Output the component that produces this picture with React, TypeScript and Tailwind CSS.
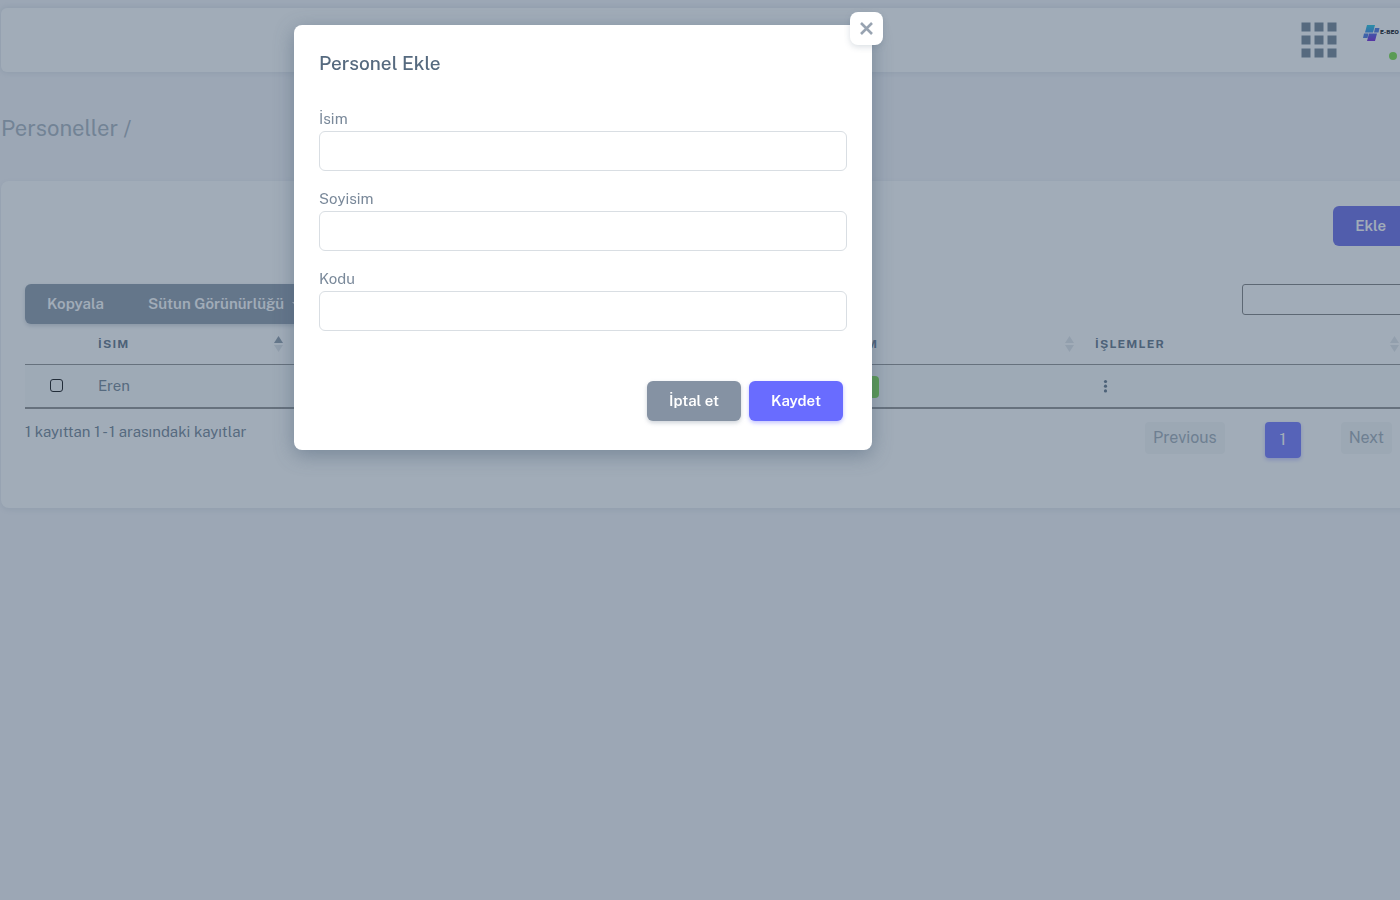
import React from "react";

type PersonnelType = { name: string; surname: string; code: string; status: string };

const personnel: PersonnelType[] = [{ name: "Eren", surname: "Yılmaz", code: "1001", status: "AKTIF" }];

const fields = [
    { id: "name", label: "İsim" },
    { id: "surname", label: "Soyisim" },
    { id: "code", label: "Kodu" },
];

export default function App() {
    const [open, setOpen] = React.useState(true);

    return (
        <div className="relative min-h-screen overflow-hidden bg-[#f5f5f9] font-['Public_Sans',Inter,sans-serif] text-[15px] leading-6 text-[#697a8d]">
            <div className="w-[calc(100%+24px)] pt-2 pl-px">
                <Navbar />
                <h4 className="mt-10 mb-[37px] text-[22px] leading-8 text-[#a1acb8]">Personeller /</h4>
                <PersonnelCard onAdd={() => setOpen(true)} />
            </div>
            {open && <AddDialog onClose={() => setOpen(false)} />}
        </div>
    );
}

const Navbar = () => (
    <nav className="flex h-16 items-center justify-end gap-[25px] rounded-md bg-white pr-[22px] shadow-[0_0_6px_1px_rgba(67,89,113,0.14)]">
        <button aria-label="Uygulamalar" className="text-[#697a8d]">
            <svg width="36" height="36" viewBox="0 0 36 36" fill="currentColor">
                {[0, 13, 26].map((y) => [0, 13, 26].map((x) => <rect key={`${x}-${y}`} x={x + 0.5} y={y + 0.5} width="9" height="9" />))}
            </svg>
        </button>
        <a href="#profil" aria-label="Profil" className="relative block size-10">
            <Logo />
            <span className="absolute right-[5px] bottom-0 size-2 rounded-full bg-[#71dd37]" />
        </a>
    </nav>
);

const Logo = () => (
    <svg width="40" height="40" viewBox="0 0 40 40">
        <defs>
            <linearGradient id="logoTop" x1="0" y1="0" x2="0" y2="1">
                <stop offset="0" stopColor="#10c3dc" />
                <stop offset="1" stopColor="#2c82e8" />
            </linearGradient>
            <linearGradient id="logoBottom" x1="0" y1="0" x2="0" y2="1">
                <stop offset="0" stopColor="#4050e0" />
                <stop offset="1" stopColor="#6a10d8" />
            </linearGradient>
        </defs>
        <path d="M5 5h8l-2 7.500H3z" fill="url(#logoTop)" />
        <path d="M13 8h4.500l-1 4.500h-4.500z" fill="#3a6ce0" />
        <path d="M2 13.500h4.500l-1 4.500H1z" fill="#3a6ce0" />
        <path d="M7 13.500h8l-2 7.500H5z" fill="url(#logoBottom)" />
        <text x="18" y="14" fontSize="6" fontWeight="900" fill="#10141c">
            E-BEO
        </text>
    </svg>
);

const PersonnelCard: React.FC<{ onAdd: () => void }> = ({ onAdd }) => (
    <section className="rounded-lg bg-white px-6 pt-[25px] pb-[50px] shadow-[0_2px_6px_0_rgba(67,89,113,0.12)]">
        <div className="flex justify-end">
            <button onClick={onAdd} className="-mr-2 h-10 rounded-md bg-[#5f61e6] px-[22px] font-semibold text-white">
                Ekle
            </button>
        </div>
        <div className="mt-[38px] flex items-start justify-between">
            <div className="flex h-10 rounded-md bg-[#8592a3] font-semibold text-white shadow-[0_2px_4px_0_rgba(133,146,163,0.4)]">
                <button className="px-[22px]">Kopyala</button>
                <button className="flex items-center gap-2 px-[22px]">
                    Sütun Görünürlüğü
                    <span className="border-x-4 border-t-4 border-x-transparent border-t-white" />
                </button>
            </div>
            <input type="search" aria-label="Ara" className="-mr-5 h-[31px] w-[178px] rounded-[3px] border border-[#777] px-2" />
        </div>
        <table className="w-full table-fixed border-b-2 border-[#888] text-left">
            <thead>
                <tr className="h-10 border-b border-[#888] text-[#566a7f]">
                    <th className="w-[53px]" />
                    <SortHead className="w-[15%]" active>
                        İSIM
                    </SortHead>
                    <SortHead>SOYISIM</SortHead>
                    <SortHead>KODU</SortHead>
                    <SortHead className="w-[268px]">DURUM</SortHead>
                    <SortHead className="w-[325px]">İŞLEMLER</SortHead>
                </tr>
            </thead>
            <tbody>
                {personnel.map((p) => (
                    <tr key={p.code} className="h-11 bg-[#f9fafb]">
                        <td className="pl-[25px]">
                            <input
                                type="checkbox"
                                aria-label={`${p.name} seç`}
                                className="block size-[13px] appearance-none rounded-[3px] border border-black"
                            />
                        </td>
                        <td className="px-5">{p.name}</td>
                        <td className="px-5">{p.surname}</td>
                        <td className="px-5">{p.code}</td>
                        <td className="px-5">
                            <span className="inline-block rounded bg-[#71dd37] px-2 text-xs leading-[22px] font-bold text-white">{p.status}</span>
                        </td>
                        <td className="px-5">
                            <button aria-label="İşlemler" className="block px-2">
                                <svg width="5" height="14" viewBox="0 0 5 14" fill="#566a7f">
                                    <circle cx="2.5" cy="2.5" r="1.6" />
                                    <circle cx="2.5" cy="7.2" r="1.6" />
                                    <circle cx="2.5" cy="11.9" r="1.6" />
                                </svg>
                            </button>
                        </td>
                    </tr>
                ))}
            </tbody>
        </table>
        <div className="flex items-start justify-between pt-[13px]">
            <p className="leading-5">1 kayıttan 1 - 1 arasındaki kayıtlar</p>
            <div className="flex items-start gap-10 pr-2 text-base">
                <button disabled className="h-8 rounded-sm bg-[#f4f6f7] px-2 text-[#98a5b1]">
                    Previous
                </button>
                <button className="size-9 rounded bg-[#696cff] text-white shadow-[0_2px_4px_0_rgba(105,108,255,0.4)]">1</button>
                <button disabled className="h-8 rounded-sm bg-[#f4f6f7] px-2 text-[#98a5b1]">
                    Next
                </button>
            </div>
        </div>
    </section>
);

const SortHead: React.FC<{ children: React.ReactNode; className?: string; active?: boolean }> = ({ children, className, active }) => (
    <th scope="col" className={className}>
        <div className="flex items-center justify-between pr-px pl-5 text-xs font-bold tracking-widest">
            {children}
            <svg width="9" height="16" viewBox="0 0 9 16" fill="#697a8d">
                <path d="M4.5 0L9 7H0z" opacity={active ? 0.8 : 0.2} />
                <path d="M4.5 16L9 9H0z" opacity="0.2" />
            </svg>
        </div>
    </th>
);

const AddDialog: React.FC<{ onClose: () => void }> = ({ onClose }) => (
    <div className="fixed inset-0 bg-[rgba(67,89,113,0.5)]">
        <form
            role="dialog"
            aria-labelledby="dialogTitle"
            onSubmit={(e) => e.preventDefault()}
            className="relative mt-[25px] ml-[21%] max-w-[578px] rounded-lg bg-white px-[25px] pt-6 pb-[25px] shadow-[0_5px_20px_0_rgba(67,89,113,0.45)]"
        >
            <button
                type="button"
                aria-label="Kapat"
                onClick={onClose}
                className="absolute -top-[13px] -right-[11px] flex size-[33px] items-center justify-center rounded-lg bg-white shadow-[0_2px_6px_0_rgba(67,89,113,0.2)]"
            >
                <svg width="13" height="13" viewBox="0 0 13 13" stroke="#98a3b1" strokeWidth="2.6">
                    <path d="M1 1l11 11M12 1L1 12" />
                </svg>
            </button>
            <h5 id="dialogTitle" className="mb-[30px] text-[19px] leading-7 font-medium text-[#566a7f]">
                Personel Ekle
            </h5>
            <div className="flex flex-col gap-4">
                {fields.map(({ id, label }) => (
                    <div key={id}>
                        <label htmlFor={id} className="block text-[#7a899a]">
                            {label}
                        </label>
                        <input id={id} className="block h-10 w-full rounded-md border border-[#d9dee3] px-3 outline-none" />
                    </div>
                ))}
            </div>
            <div className="mt-[46px] flex justify-end gap-2 py-1 pr-1 font-semibold text-white">
                <button type="button" onClick={onClose} className="h-10 w-[94px] rounded-md bg-[#8592a3] shadow-[0_2px_4px_0_rgba(133,146,163,0.4)]">
                    İptal et
                </button>
                <button type="submit" className="h-10 w-[94px] rounded-md bg-[#696cff] shadow-[0_2px_4px_0_rgba(105,108,255,0.4)]">
                    Kaydet
                </button>
            </div>
        </form>
    </div>
);
